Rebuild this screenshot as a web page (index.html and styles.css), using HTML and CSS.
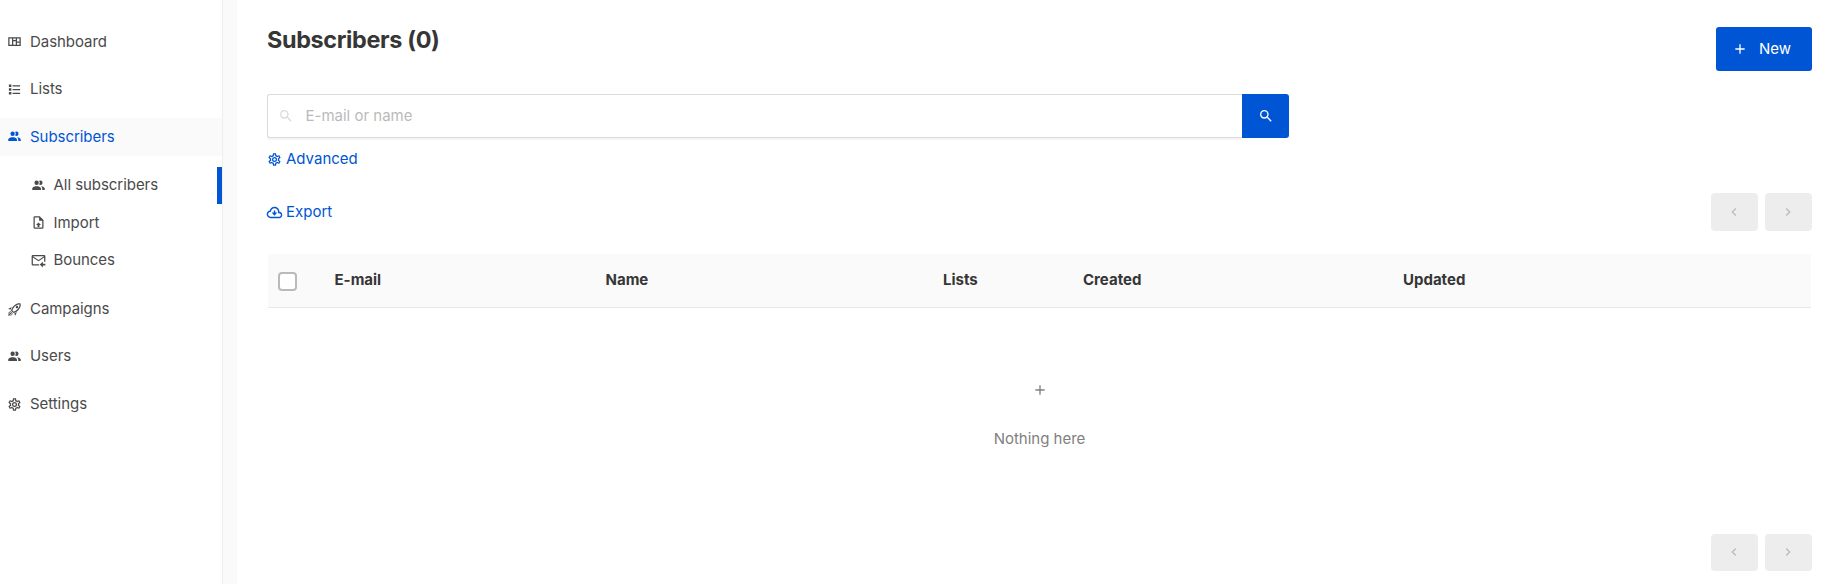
FILE: index.html
```html
<!DOCTYPE html>
<html lang="en">
<head>
<meta charset="utf-8">
<title>Subscribers</title>
<link rel="stylesheet" href="styles.css">
</head>
<body>
<svg class="sprite" aria-hidden="true">
  <symbol id="people" viewBox="0 0 24 24"><path d="M16 17V19H2V17S2 13 9 13 16 17 16 17M12.5 7.5A3.5 3.5 0 1 0 9 11A3.5 3.5 0 0 0 12.5 7.5M15.94 13A5.32 5.32 0 0 1 18 17V19H22V17S22 13.37 15.94 13M15 4A3.39 3.39 0 0 0 13.07 4.59A5 5 0 0 1 13.07 10.41A3.39 3.39 0 0 0 15 11A3.5 3.5 0 0 0 15 4Z"/></symbol>
  <symbol id="magnify" viewBox="0 0 24 24"><path d="M9.5,3A6.5,6.5 0 0,1 16,9.5C16,11.11 15.41,12.59 14.44,13.73L14.71,14H15.5L20.5,19L19,20.5L14,15.5V14.71L13.73,14.44C12.59,15.41 11.11,16 9.5,16A6.5,6.5 0 0,1 3,9.5A6.5,6.5 0 0,1 9.5,3M9.5,5C7,5 5,7 5,9.5C5,12 7,14 9.5,14C12,14 14,12 14,9.5C14,7 12,5 9.5,5Z"/></symbol>
  <symbol id="cog" viewBox="0 0 24 24"><path d="M12,8A4,4 0 0,1 16,12A4,4 0 0,1 12,16A4,4 0 0,1 8,12A4,4 0 0,1 12,8M12,10A2,2 0 0,0 10,12A2,2 0 0,0 12,14A2,2 0 0,0 14,12A2,2 0 0,0 12,10M10,22C9.75,22 9.54,21.82 9.5,21.58L9.13,18.93C8.5,18.68 7.96,18.34 7.44,17.94L4.95,18.95C4.73,19.03 4.46,18.95 4.34,18.73L2.34,15.27C2.21,15.05 2.27,14.78 2.46,14.63L4.57,12.97L4.5,12L4.57,11L2.46,9.37C2.27,9.22 2.21,8.95 2.34,8.73L4.34,5.27C4.46,5.05 4.73,4.96 4.95,5.05L7.44,6.05C7.96,5.66 8.5,5.32 9.13,5.07L9.5,2.42C9.54,2.18 9.75,2 10,2H14C14.25,2 14.46,2.18 14.5,2.42L14.87,5.07C15.5,5.32 16.04,5.66 16.56,6.05L19.05,5.05C19.27,4.96 19.54,5.05 19.66,5.27L21.66,8.73C21.79,8.95 21.73,9.22 21.54,9.37L19.43,11L19.5,12L19.43,13L21.54,14.63C21.73,14.78 21.79,15.05 21.66,15.27L19.66,18.73C19.54,18.95 19.27,19.04 19.05,18.95L16.56,17.95C16.04,18.34 15.5,18.68 14.87,18.93L14.5,21.58C14.46,21.82 14.25,22 14,22H10M11.25,4L10.88,6.61C9.68,6.86 8.62,7.5 7.85,8.39L5.44,7.35L4.69,8.65L6.8,10.2C6.4,11.37 6.4,12.64 6.8,13.8L4.68,15.36L5.43,16.66L7.86,15.62C8.63,16.5 9.68,17.14 10.87,17.38L11.24,20H12.76L13.13,17.39C14.32,17.14 15.37,16.5 16.14,15.62L18.57,16.66L19.32,15.36L17.2,13.81C17.6,12.64 17.6,11.37 17.2,10.2L19.31,8.65L18.56,7.35L16.15,8.39C15.38,7.5 14.32,6.86 13.12,6.62L12.75,4H11.25Z"/></symbol>
  <symbol id="list" viewBox="0 0 24 24"><path d="M3,4H7V8H3V4M9,5V7H21V5H9M3,10H7V14H3V10M9,11V13H21V11H9M3,16H7V20H3V16M9,17V19H21V17H9"/></symbol>
  <symbol id="dashboard" viewBox="0 0 24 24"><path fill-rule="evenodd" d="M2,5V19H22V5H2M4,7H8V17H4V7M10,7H14V9.5H10V7M10,11.5H14V17H10V11.5M16,7H20V12H16V7M16,14H20V17H16V14Z"/></symbol>
  <symbol id="file" viewBox="0 0 24 24"><path d="M14,2L20,8V20A2,2 0 0,1 18,22H6A2,2 0 0,1 4,20V4A2,2 0 0,1 6,2H14M18,20V9H13V4H6V20H18M12,12L16,16H13.5V19H10.5V16H8L12,12Z"/></symbol>
  <symbol id="bounce" viewBox="0 0 24 24"><path fill-rule="evenodd" d="M3,3H21A2,2 0 0 1 23,5V14H21V7L12,13L3,7V18H13V20H3A2,2 0 0 1 1,18V5A2,2 0 0 1 3,3M3,5L12,11L21,5H3Z"/><path d="M19,14V17H23V20H19V23L14,18.5L19,14Z"/></symbol>
  <symbol id="rocket" viewBox="0 0 24 24"><path d="M13.13 22.19L11.5 18.36C13.07 17.78 14.54 17 15.9 16.09L13.13 22.19M5.64 12.5L1.81 10.87L7.91 8.1C7 9.46 6.22 10.93 5.64 12.5M19.22 4C19.5 4 19.75 4 19.96 4.05C20.13 5.44 19.94 8.3 16.66 11.58C14.96 13.29 12.93 14.6 10.65 15.47L8.5 13.37C9.42 11.06 10.73 9.03 12.42 7.34C15.18 4.58 17.64 4 19.22 4M19.22 2C17.24 2 14.24 2.69 11 5.93C8.81 8.12 7.5 10.53 6.65 12.64C6.37 13.39 6.56 14.21 7.11 14.77L9.24 16.89C9.62 17.27 10.13 17.5 10.66 17.5C10.89 17.5 11.13 17.44 11.36 17.35C13.5 16.53 15.88 15.19 18.07 13C23.73 7.34 21.61 2.39 21.61 2.39S20.7 2 19.22 2M14.54 9.46C13.76 8.68 13.76 7.41 14.54 6.63S16.59 5.85 17.37 6.63C18.14 7.41 18.15 8.68 17.37 9.46C16.59 10.24 15.32 10.24 14.54 9.46M6.24 22L9.88 18.36C9.54 18.27 9.21 18.12 8.91 17.91L4.83 22H6.24M2 22H3.41L8.18 17.24L6.76 15.83L2 20.59V22M2 19.17L6.09 15.09C5.88 14.79 5.73 14.47 5.64 14.12L2 17.76V19.17Z"/></symbol>
  <symbol id="cloud" viewBox="0 0 24 24"><path d="M6.5 20Q4.22 20 2.61 18.43Q1 16.85 1 14.58Q1 12.63 2.17 11.1Q3.35 9.57 5.25 9.15Q5.88 6.85 7.75 5.43Q9.63 4 12 4Q14.93 4 16.96 6.04Q19 8.07 19 11Q20.73 11.2 21.86 12.5Q23 13.78 23 15.5Q23 17.38 21.69 18.69Q20.38 20 18.5 20H6.5M6.5 18H18.5Q19.55 18 20.27 17.27Q21 16.55 21 15.5Q21 14.45 20.27 13.73Q19.55 13 18.5 13H17V11Q17 8.93 15.54 7.46Q14.08 6 12 6Q9.93 6 8.46 7.46Q7 8.93 7 11H6.5Q5.05 11 4.03 12.03Q3 13.05 3 14.5Q3 15.95 4.03 17Q5.05 18 6.5 18M11 9H13V12H16L12 16.5L8 12H11V9Z"/></symbol>
  <symbol id="plus" viewBox="0 0 24 24"><path d="M19,13H13V19H11V13H5V11H11V5H13V11H19V13Z"/></symbol>
  <symbol id="left" viewBox="0 0 24 24"><path d="M15.41,16.58L10.83,12L15.41,7.41L14,6L8,12L14,18L15.41,16.58Z"/></symbol>
  <symbol id="right" viewBox="0 0 24 24"><path d="M8.59,16.58L13.17,12L8.59,7.41L10,6L16,12L10,18L8.59,16.58Z"/></symbol>
</svg>
<div class="app">
  <nav class="sidebar">
    <a class="item"><svg class="icon"><use href="#dashboard"/></svg>Dashboard</a>
    <a class="item"><svg class="icon"><use href="#list"/></svg>Lists</a>
    <a class="item active"><svg class="icon"><use href="#people"/></svg>Subscribers</a>
    <div class="submenu">
      <a class="subitem current"><svg class="icon"><use href="#people"/></svg>All subscribers</a>
      <a class="subitem"><svg class="icon"><use href="#file"/></svg>Import</a>
      <a class="subitem"><svg class="icon"><use href="#bounce"/></svg>Bounces</a>
    </div>
    <a class="item"><svg class="icon"><use href="#rocket"/></svg>Campaigns</a>
    <a class="item"><svg class="icon"><use href="#people"/></svg>Users</a>
    <a class="item"><svg class="icon"><use href="#cog"/></svg>Settings</a>
  </nav>
  <main class="main">
    <header class="header">
      <h1 class="title">Subscribers (0)</h1>
      <button class="new"><svg class="icon"><use href="#plus"/></svg>New</button>
    </header>
    <div class="search">
      <div class="field"><svg class="icon"><use href="#magnify"/></svg><span>E-mail or name</span></div>
      <button class="go"><svg class="icon"><use href="#magnify"/></svg></button>
    </div>
    <a class="link advanced"><svg class="icon"><use href="#cog"/></svg>Advanced</a>
    <div class="toolbar">
      <a class="link"><svg class="icon cloud"><use href="#cloud"/></svg>Export</a>
      <div class="pager"><button class="page"><svg class="icon"><use href="#left"/></svg></button><button class="page"><svg class="icon"><use href="#right"/></svg></button></div>
    </div>
    <div class="thead">
      <div><span class="checkbox"></span></div><div>E-mail</div><div>Name</div><div>Lists</div><div>Created</div><div>Updated</div>
    </div>
    <div class="empty"><svg class="icon"><use href="#plus"/></svg><p>Nothing here</p></div>
    <div class="pager bottom"><button class="page"><svg class="icon"><use href="#left"/></svg></button><button class="page"><svg class="icon"><use href="#right"/></svg></button></div>
  </main>
</div>
</body>
</html>
```
FILE: styles.css
```css
* { box-sizing: border-box; margin: 0; padding: 0; }
body { font: 15px/22.5px Inter, sans-serif; color: #4a4a4a; background: #fff; overflow: hidden; }
button { font: inherit; border: 0; }
.sprite { display: none; }
.icon { width: 16px; height: 16px; fill: currentColor; flex: none; }
.app { display: flex; height: 584px; }
.sidebar { width: 223px; border-right: 1px solid #eee; padding-top: 23px; flex: none; letter-spacing: -0.05px; }
.sidebar .icon { width: 15px; height: 15px; }
.item, .subitem { display: flex; align-items: center; height: 37.5px; padding-left: 7px; gap: 8px; }
.item { margin-bottom: 10px; }
.active { color: #0055d4; background: #fafafa; }
.submenu { margin: 11px 0 11.25px; }
.subitem { padding-left: 30.5px; gap: 8px; }
.current { border-right: 5px solid #0055d4; }
.main { flex: 1; border-left: 14px solid #fafafa; padding: 27px 23px 0 30px; display: flex; flex-direction: column; }
.header { display: flex; justify-content: space-between; height: 67px; }
.title { font-size: 23.4px; line-height: 26px; font-weight: 700; letter-spacing: -0.35px; color: #363636; }
.new { width: 96px; height: 44px; background: #0055d4; color: #fff; border-radius: 3px; display: flex; align-items: center; justify-content: center; gap: 11px; padding-right: 5px; }
.search { display: flex; width: 1022px; height: 44px; }
.field { flex: 1; display: flex; align-items: center; gap: 11.5px; border: 1px solid #dbdbdb; border-right: 0; border-radius: 3px 0 0 3px; padding: 0 0 0 10px; color: #bababa; box-shadow: 0 2px 0 #f5f5f5; }
.field .icon { color: #dbdbdb; }
.go { width: 47px; background: #0055d4; color: #fff; border-radius: 0 3px 3px 0; display: flex; align-items: center; justify-content: center; }
.link { color: #0055d4; display: flex; align-items: center; gap: 4px; }
.link .icon { width: 15px; height: 15px; }
.link .cloud { width: 17px; height: 17px; margin: 0 -1px; }
.advanced { margin-top: 10px; height: 23px; }
.toolbar { display: flex; justify-content: space-between; height: 38px; margin-top: 22px; }
.pager { display: flex; gap: 7px; }
.page { width: 47px; height: 38px; border-radius: 4px; background: #ededed; color: #bbb; display: flex; align-items: center; justify-content: center; padding-right: 1px; }
.thead { display: grid; grid-template-columns: 66.5px 271px 337.5px 140px 320px 1fr; height: 54px; margin: 23px 1px 0; background: #fafafa; border-bottom: 1px solid #e8e8e8; font-weight: 700; color: #363636; padding-top: 15px; }
.checkbox { display: block; width: 19px; height: 19px; margin: 3px 0 0 10px; border: 2px solid #bababa; border-radius: 4px; background: #fff; }
.empty { height: 226px; padding-top: 74px; display: flex; flex-direction: column; align-items: center; color: #808080; }
.empty p { margin-top: 30px; }
.bottom { justify-content: flex-end; }
.bottom .page { height: 37px; padding-bottom: 1px; }
```
